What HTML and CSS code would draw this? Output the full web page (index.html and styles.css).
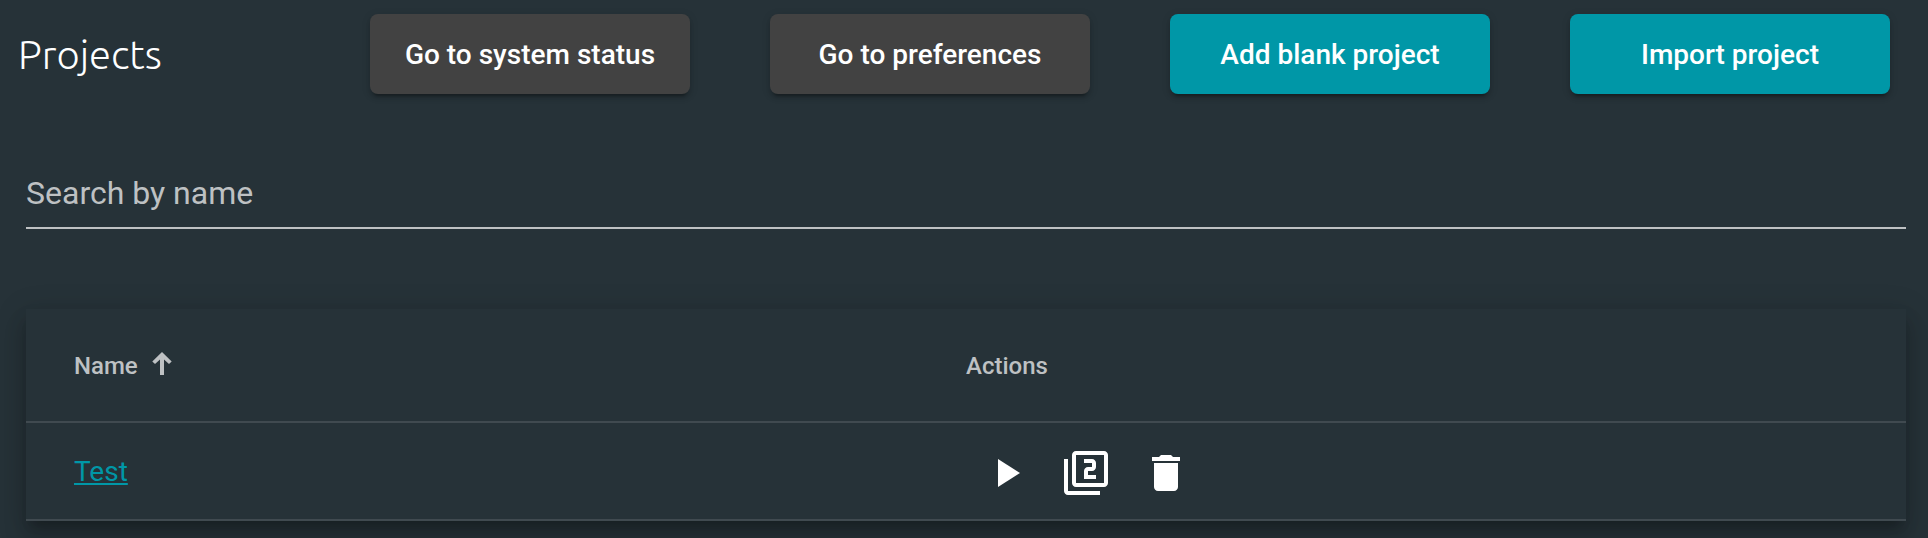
FILE: index.html
```html
<!DOCTYPE html>
<html lang="en">
<head>
<meta charset="utf-8">
<title>Projects</title>
<link rel="stylesheet" href="styles.css">
</head>
<body>
<main class="page">
  <header class="toolbar">
    <h1 class="title">Projects</h1>
    <button class="button">Go to system status</button>
    <button class="button">Go to preferences</button>
    <button class="button primary">Add blank project</button>
    <button class="button primary">Import project</button>
  </header>
  <div class="search"><span class="search-label">Search by name</span></div>
  <section class="table">
    <div class="row head">
      <div class="cell name">Name
        <svg class="sort" width="20" height="24" viewBox="0 0 20 24"><path d="M8 24V8.500L3 13 .3 10.500 10 1 19.700 10.500 17 13 12 8.500V24z" fill="currentColor"/></svg>
      </div>
      <div class="cell">Actions</div>
    </div>
    <div class="row item">
      <div class="cell"><a class="link" href="#">Test</a></div>
      <div class="cell actions">
        <button class="icon-button" aria-label="Open"><svg class="icon" viewBox="0 0 24 24"><path d="M8 5v14l11-7z"/></svg></button>
        <button class="icon-button" aria-label="Duplicate"><svg class="icon" viewBox="0 0 24 24"><path d="M3 5H1v16c0 1.100.9 2 2 2h16v-2H3V5zm18-4H7c-1.100 0-2 .9-2 2v14c0 1.100.9 2 2 2h14c1.100 0 2-.9 2-2V3c0-1.100-.9-2-2-2zm0 16H7V3h14v14zm-4-4h-4v-2h2c1.100 0 2-.89 2-2V7c0-1.110-.9-2-2-2h-4v2h4v2h-2c-1.100 0-2 .89-2 2v4h6v-2z"/></svg></button>
        <button class="icon-button" aria-label="Delete"><svg class="icon" viewBox="0 0 24 24"><path d="M6 19c0 1.100.9 2 2 2h8c1.100 0 2-.9 2-2V7H6v12zM19 4h-3.500l-1-1h-5l-1 1H5v2h14V4z"/></svg></button>
      </div>
    </div>
  </section>
</main>
</body>
</html>
```
FILE: styles.css
```css
* { box-sizing: border-box; }
body {
  margin: 0;
  height: 538px;
  overflow: hidden;
  background: #263238;
  color: #fff;
  font-family: Roboto, sans-serif;
}
.page { padding: 14px 22px 0 18px; }
.toolbar { display: flex; align-items: center; height: 80px; }
.title {
  flex: none;
  width: 352px;
  margin: 0;
  padding-top: 1px;
  font: 300 40px/55px Ubuntu, "Open Sans", sans-serif;
}
.button {
  width: 320px;
  height: 80px;
  margin-right: 80px;
  flex: none;
  border: 0;
  border-radius: 8px;
  background: #424242;
  color: #fff;
  font: 500 28px/79px Roboto, sans-serif;
  padding: 1px 0 0;
  box-shadow: 0 6px 2px -4px rgba(0,0,0,.2), 0 4px 4px 0 rgba(0,0,0,.14), 0 2px 10px 0 rgba(0,0,0,.12);
}
.primary { background: #0097a7; }
.search {
  height: 65px;
  margin: 70px 0 0 8px;
  border-bottom: 2px solid #bec1c3;
}
.search-label { display: block; font-size: 32px; line-height: 36px; padding-top: 11px; color: #bec1c3; }
.table {
  margin: 80px 0 0 8px;
  background: #263238;
  box-shadow: 0 10px 10px -6px rgba(0,0,0,.2), 0 16px 20px 2px rgba(0,0,0,.14), 0 6px 28px 4px rgba(0,0,0,.12);
}
.row {
  display: grid;
  grid-template-columns: 892px 1fr;
  align-items: center;
  padding-left: 48px;
  border-bottom: 2px solid #404a50;
}
.head { height: 114px; padding-top: 2px; font-size: 24px; line-height: 28px; font-weight: 500; color: #bec1c3; }
.name { display: flex; align-items: center; gap: 14px; }
.sort { margin-top: -6px; }
.item { height: 98px; font-size: 28px; line-height: 33px; padding-top: 1px; }
.link { color: #0097a7; text-decoration: underline; }
.actions { display: flex; padding-top: 3px; }
.icon-button { width: 80px; height: 80px; padding: 16px; border: 0; background: none; color: #fff; }
.icon { display: block; width: 48px; height: 48px; fill: currentColor; }
```
